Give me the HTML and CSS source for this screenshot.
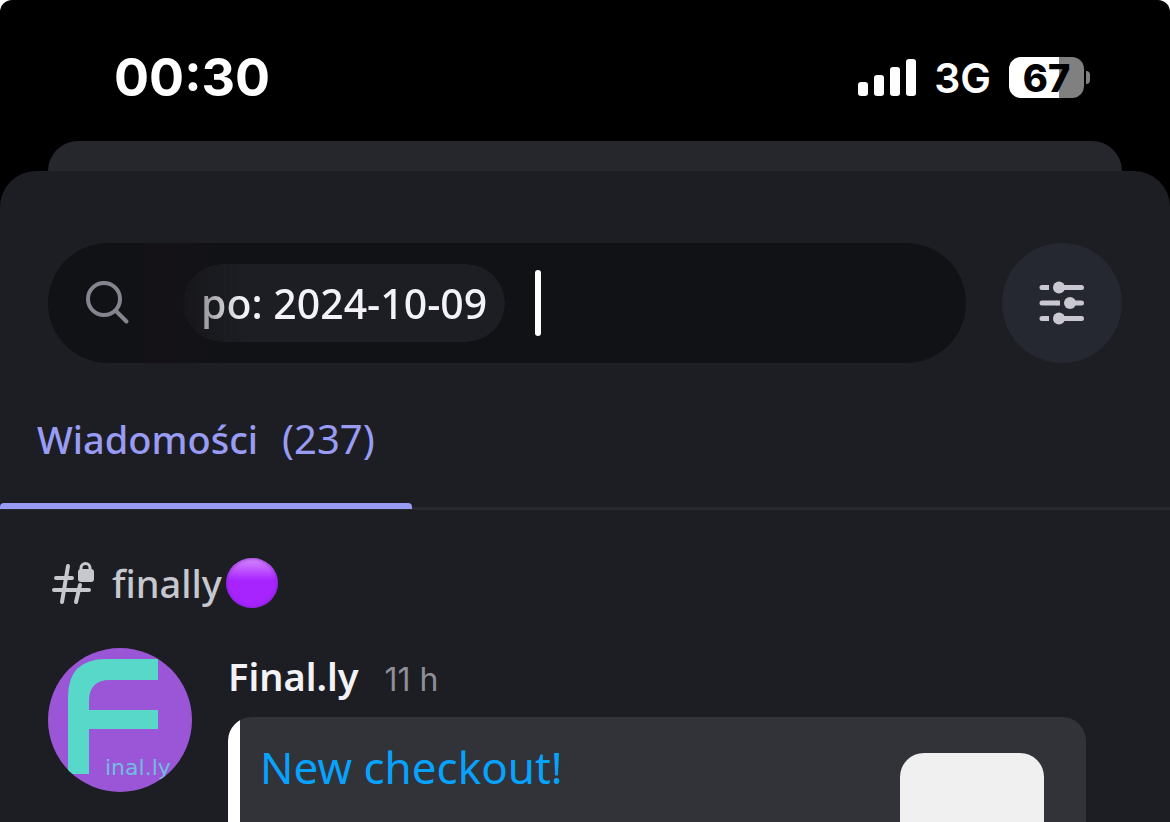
FILE: index.html
```html
<!DOCTYPE html>
<html lang="pl">
<head>
    <meta charset="UTF-8">
    <meta name="viewport" content="width=device-width, initial-scale=1.0">
    <title>Wiadomości</title>
    <link rel="stylesheet" href="styles.css">
</head>
<body>
    <div class="screen">
        <!-- Status bar -->
        <header class="status-bar">
            <time class="clock">00:30</time>
            <div class="status-icons">
                <svg class="signal" width="58" height="38" viewBox="0 0 58 38" fill="#fff" aria-hidden="true">
                    <rect x="0" y="23" width="10" height="14" rx="3"/>
                    <rect x="16" y="16" width="10" height="21" rx="3"/>
                    <rect x="32" y="8" width="10" height="29" rx="3"/>
                    <rect x="48" y="0" width="10" height="37" rx="3"/>
                </svg>
                <span class="network">3G</span>
                <div class="battery">
                    <span class="battery-level">67</span>
                    <span class="battery-tip"></span>
                </div>
            </div>
        </header>

        <div class="sheet-behind"></div>

        <main class="sheet">
            <!-- Search -->
            <form class="search">
                <label class="search-box">
                    <svg class="search-icon" width="44" height="44" viewBox="0 0 44 44" fill="none" stroke="#85858f" stroke-width="4" stroke-linecap="round" aria-hidden="true">
                        <circle cx="18" cy="18" r="16"/>
                        <path d="M29.500 29.500L40.500 40.500"/>
                    </svg>
                    <span class="filters">
                        <span class="chip">po: 2024-10-09</span>
                    </span>
                    <span class="caret"></span>
                    <input class="search-input" type="text" aria-label="Szukaj">
                </label>
                <button class="filter-button" type="button" aria-label="Filtry">
                    <svg width="46" height="44" viewBox="0 0 46 44" stroke="#c9c8d0" stroke-width="5" stroke-linecap="round" aria-hidden="true">
                        <path d="M3 6.500H6M22 6.500H42.500M3 22H17M34 22H42.500M3 37.500H6M22 37.500H42.500"/>
                        <g fill="#c9c8d0" stroke="none">
                            <path d="M6 4h4v5H6zM17 19.500h4v5h-4zM6 35h4v5H6z"/>
                            <circle cx="20" cy="6.500" r="6"/>
                            <circle cx="31" cy="22" r="6"/>
                            <circle cx="20" cy="37.500" r="6"/>
                        </g>
                    </svg>
                </button>
            </form>

            <!-- Tabs -->
            <nav class="tabs">
                <a class="tab" href="#results">Wiadomości <span class="count">(237)</span></a>
            </nav>

            <!-- Results -->
            <section id="results">
                <h2 class="channel">
                    <svg class="channel-icon" width="44" height="44" viewBox="0 0 44 44" fill="none" stroke="#c7c8ce" stroke-width="4" stroke-linecap="round" stroke-linejoin="round" aria-hidden="true">
                        <path d="M16 5L10 41M4 17H20M2 29H37M28 24L24 41"/>
                        <path d="M29 9V7a4.500 4.500 0 0 1 9 0v2" stroke-width="3"/>
                        <rect x="26" y="8" width="16" height="13" rx="3" fill="#c7c8ce" stroke="none"/>
                    </svg>
                    <span>finally</span>
                    <span class="dot"></span>
                </h2>

                <article class="message">
                    <svg class="avatar" width="144" height="144" viewBox="0 0 144 144" role="img" aria-label="Final.ly">
                        <defs>
                            <clipPath id="avatar-clip"><circle cx="72" cy="72" r="72"/></clipPath>
                        </defs>
                        <g clip-path="url(#avatar-clip)">
                            <rect width="144" height="144" fill="#9a56d6"/>
                            <path fill="#57d8c8" d="M110 11V32H62Q41 32 41 53V62H110V81H41V126H20V49Q20 11 58 11Z"/>
                            <text class="avatar-text" x="57" y="127">inal.ly</text>
                        </g>
                    </svg>
                    <div class="message-body">
                        <div class="message-head">
                            <span class="author">Final.ly</span>
                            <time class="age">11 h</time>
                        </div>
                        <div class="embed">
                            <a class="embed-title" href="#checkout">New checkout!</a>
                            <div class="thumbnail"></div>
                        </div>
                    </div>
                </article>
            </section>
        </main>
    </div>
</body>
</html>
```

FILE: styles.css
```css
* {
    box-sizing: border-box;
    margin: 0;
    padding: 0;
}

body {
    background: #fff;
    font-family: "Noto Sans", sans-serif;
    font-size: 38px;
    line-height: 48px;
    color: #f2f2f7;
}

.screen {
    display: flex;
    flex-direction: column;
    height: 100vh;
    overflow: hidden;
    background: #000;
    border-radius: 12px 12px 0 0;
}

/* Status bar */
.status-bar {
    display: flex;
    flex: none;
    justify-content: space-between;
    align-items: center;
    height: 141px;
    padding: 14px 80px 0 114px;
    font-family: Inter, sans-serif;
    color: #fff;
}

.clock {
    font-size: 52px;
    font-weight: 700;
}

.status-icons {
    display: flex;
    align-items: center;
    gap: 18px;
}

.network {
    font-size: 41px;
    font-weight: 600;
}

.battery {
    display: flex;
    align-items: center;
    gap: 2px;
}

.battery-level {
    width: 75px;
    height: 41px;
    border-radius: 12px;
    background: linear-gradient(to right, #fff 67%, #808080 67%);
    color: #000;
    font-size: 38px;
    font-weight: 800;
    line-height: 42px;
    text-align: center;
}

.battery-tip {
    width: 4px;
    height: 13px;
    border-radius: 0 6px 6px 0;
    background: #808080;
}

/* Sheets */
.sheet-behind {
    flex: none;
    height: 30px;
    margin: 0 48px;
    border-radius: 30px 30px 0 0;
    background: #26272c;
}

.sheet {
    flex: 1;
    min-height: 0;
    overflow: hidden;
    padding-top: 72px;
    border-radius: 36px 36px 0 0;
    background: #1d1e23;
}

/* Search */
.search {
    display: flex;
    gap: 36px;
    padding: 0 48px;
}

.search-box {
    display: flex;
    flex: 1;
    align-items: center;
    min-width: 0;
    height: 120px;
    padding: 0 36px;
    border-radius: 60px;
    background: #111216;
}

.search-icon {
    flex: none;
    margin-left: 2px;
}

.filters {
    display: flex;
    align-items: center;
    align-self: stretch;
    margin-left: 15px;
    padding-left: 38px;
    background: linear-gradient(to right, #151217, #111216 80px);
}

.chip {
    height: 78px;
    padding: 0 18px;
    border-radius: 39px;
    background: #1d1e23;
    font-size: 41px;
    font-weight: 500;
    line-height: 78px;
    white-space: nowrap;
    -webkit-mask-image: linear-gradient(to right, rgba(0, 0, 0, 0.4), #000 60px);
    mask-image: linear-gradient(to right, rgba(0, 0, 0, 0.4), #000 60px);
}

.caret {
    flex: none;
    width: 6px;
    height: 66px;
    margin-left: 30px;
    border-radius: 3px;
    background: #fff;
}

.search-input {
    flex: 1;
    width: 0;
    min-width: 0;
    height: 66px;
    border: none;
    outline: none;
    background: transparent;
    color: inherit;
    font: inherit;
}

.filter-button {
    display: flex;
    flex: none;
    justify-content: center;
    align-items: center;
    width: 120px;
    height: 120px;
    border: none;
    border-radius: 50%;
    background: #252830;
    cursor: pointer;
}

/* Tabs */
.tabs {
    display: flex;
    height: 147px;
    border-bottom: 3px solid #28292e;
}

.tab {
    position: relative;
    height: 146px;
    padding: 52px 37px 0;
    color: #999cf5;
    font-weight: 500;
    text-decoration: none;
}

.tab::after {
    content: "";
    position: absolute;
    right: 0;
    bottom: 0;
    left: 0;
    height: 6px;
    border-radius: 4px 4px 0 0;
    background: #999cf5;
}

.count {
    margin-left: 14px;
    font-size: 40px;
    font-weight: 400;
}

/* Results */
.channel {
    display: flex;
    align-items: center;
    padding: 48px 48px 0 52px;
    color: #c7c8ce;
    font-size: 38px;
    font-weight: 500;
}

.channel-icon {
    margin-right: 16px;
}

.dot {
    width: 52px;
    height: 50px;
    margin-left: 4px;
    border-radius: 50%;
    background: linear-gradient(to bottom, #d98cff, #a724ff 45%);
    box-shadow: inset 0 0 4px #7d1fc4;
}

.message {
    display: flex;
    gap: 36px;
    padding: 40px 84px 0 48px;
}

.avatar {
    flex: none;
}

.avatar-text {
    fill: #6fbde0;
    font-family: "DejaVu Sans", sans-serif;
    font-size: 22px;
}

.message-body {
    flex: 1;
    min-width: 0;
    padding-top: 4px;
}

.message-head {
    display: flex;
    align-items: baseline;
    gap: 26px;
    height: 48px;
    margin-bottom: 17px;
}

.author {
    font-weight: 600;
}

.age {
    color: #8e8e98;
    font-family: Inter, sans-serif;
    font-size: 32px;
}

.embed {
    display: flex;
    justify-content: space-between;
    height: 216px;
    padding: 36px 42px 36px 32px;
    border-radius: 24px;
    background: linear-gradient(to right, #fff 12px, #323338 12px);
}

.embed-title {
    margin-top: -10px;
    color: #07a2fc;
    font-size: 44px;
    text-decoration: none;
}

.thumbnail {
    flex: none;
    width: 144px;
    height: 144px;
    border-radius: 24px;
    background: #f0f0f0;
}
```
